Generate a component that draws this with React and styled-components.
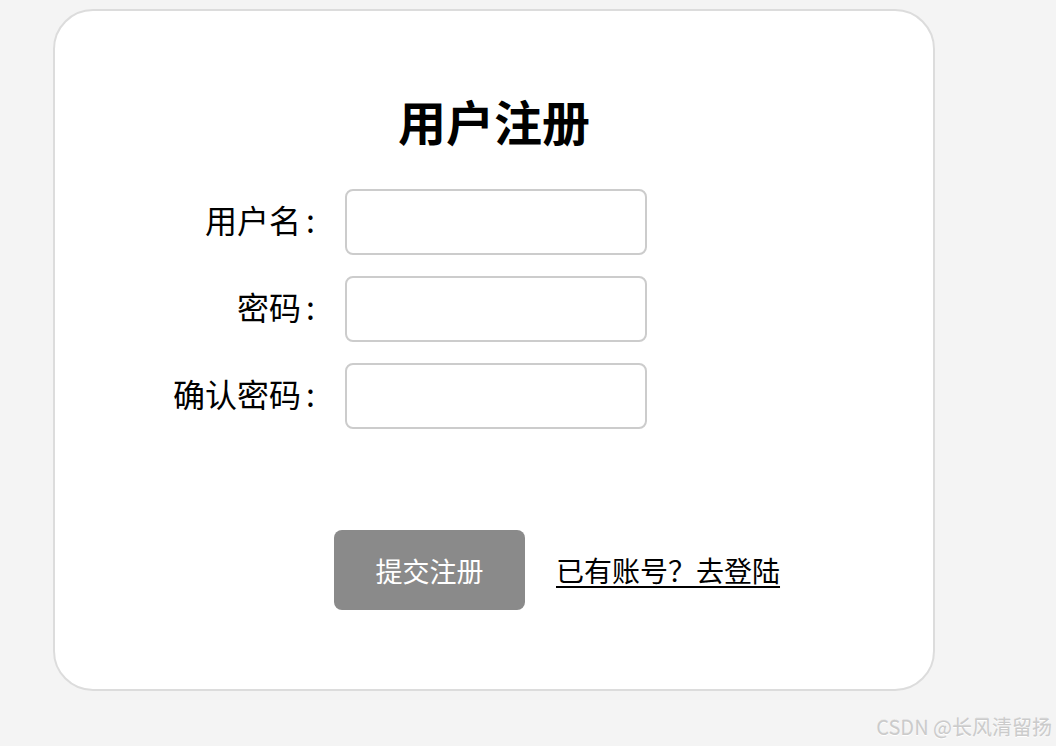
import React from 'react';
import styled, { createGlobalStyle } from 'styled-components';

const GlobalStyle = createGlobalStyle`
  html, body {
    margin: 0;
    padding: 0;
    background: #f4f4f4;
    font-family: "Noto Sans CJK SC", "Noto Sans", sans-serif;
    color: #000;
  }
`;

const Page = styled.div`
  width: 1056px;
  height: 746px;
  padding: 9px 0 0 53px;
  box-sizing: border-box;
  position: relative;
`;

const Card = styled.div`
  width: 882px;
  height: 682px;
  box-sizing: border-box;
  background: #fff;
  border: 2px solid #dcdcdc;
  border-radius: 40px;
  padding-top: 80px;
  display: flex;
  flex-direction: column;
`;

const Title = styled.h1`
  margin: 0;
  font-size: 48px;
  line-height: 58px;
  font-weight: 700;
  text-align: center;
`;

const Form = styled.div`
  margin-top: 40px;
  display: flex;
  flex-direction: column;
  gap: 21px;
`;

const Row = styled.div`
  display: flex;
  align-items: center;
`;

const Label = styled.label`
  width: 260px;
  margin-right: 30px;
  padding-bottom: 6px;
  text-align: right;
  font-size: 32px;
  line-height: 40px;
`;

const Colon = styled.span`
  margin-left: 5px;
`;

const Input = styled.input`
  width: 302px;
  height: 66px;
  box-sizing: border-box;
  border: 2px solid #cccccc;
  border-radius: 8px;
  outline: none;
  font-size: 24px;
  padding: 0 12px;
`;

const Actions = styled.div`
  margin-top: 101px;
  padding-left: 279px;
  display: flex;
  align-items: center;
  gap: 31px;
`;

const SubmitButton = styled.button`
  width: 191px;
  height: 80px;
  border: none;
  border-radius: 8px;
  background: #8a8a8a;
  color: #fff;
  font-family: inherit;
  font-size: 27px;
  cursor: pointer;
`;

const LoginLink = styled.a`
  color: #000;
  font-size: 28px;
  text-decoration: underline;
  text-decoration-thickness: 2px;
  text-underline-offset: 4px;
  cursor: pointer;
`;

const Watermark = styled.div`
  position: absolute;
  right: 4px;
  bottom: 5px;
  font-size: 20px;
  color: #cbcbcb;
  text-shadow: 0 1px 0 #fff, 0 -1px 0 rgba(0, 0, 0, 0.06);
`;

const fields = [
  { label: '用户名', type: 'text' },
  { label: '密码', type: 'password' },
  { label: '确认密码', type: 'password' },
];

const App = () => {
  return (
    <Page>
      <GlobalStyle />
      <Card>
        <Title>用户注册</Title>
        <Form>
          {fields.map((f) => (
            <Row key={f.label}>
              <Label>
                {f.label}
                <Colon>:</Colon>
              </Label>
              <Input type={f.type} />
            </Row>
          ))}
        </Form>
        <Actions>
          <SubmitButton>提交注册</SubmitButton>
          <LoginLink>已有账号？去登陆</LoginLink>
        </Actions>
      </Card>
      <Watermark>CSDN @长风清留扬</Watermark>
    </Page>
  );
};

export default App;
